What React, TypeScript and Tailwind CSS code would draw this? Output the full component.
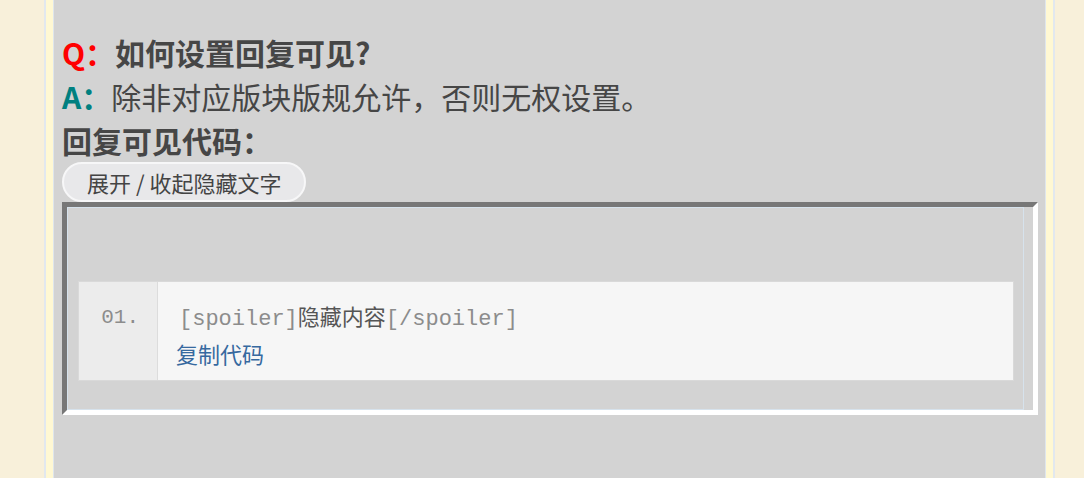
export default function App() {
  const sans = { fontFamily: '"Noto Sans CJK SC", "Noto Sans", sans-serif' };
  const mono = { fontFamily: '"Liberation Mono", monospace' };
  return (
    <div className="w-[1084px] h-[478px] overflow-hidden bg-[#f8f0da]" style={sans}>
      <div className="ml-[44px] w-[1011px] h-[478px] border-x-2 border-[#e2e8ee] bg-[#fff8d3] px-[7px]">
        <div className="h-full border-x border-[#dfe6ec] bg-[#d3d3d3] pl-[8px] pt-[30px] text-[#464646]">
          <div className="h-[44px] leading-[44px] text-[30px] font-bold whitespace-nowrap">
            <span className="text-[#ff0000]">Q：</span>如何设置回复可见?
          </div>
          <div className="h-[44px] leading-[44px] text-[30px] whitespace-nowrap">
            <span className="text-[#008080] font-bold">A：</span>除非对应版块版规允许，否则无权设置。
          </div>
          <div className="h-[44px] leading-[44px] text-[30px] font-bold whitespace-nowrap">回复可见代码：</div>
          <div className="h-[40px] flex">
            <div className="h-[40px] rounded-full border-2 border-[#f7f7f8] bg-[#e8e8ea] px-[23px] text-[22px] leading-[36px] text-[#444] whitespace-nowrap">
              展开 / 收起隐藏文字
            </div>
          </div>
          <div className="w-[976px] h-[213px] border-[5px] border-t-[#777777] border-l-[#777777] border-r-white border-b-white bg-[#d3d3d3]">
            <div className="w-[957px] h-full border border-[#d6e2ec] pt-[73px] pl-[10px] pr-[9px]">
              <div className="flex h-[100px] border border-[#d9d9d9]">
                <div
                  className="w-[79px] bg-[#ececec] border-r border-[#dcdcdc] pt-[19px] pr-[18px] text-right text-[21px] leading-[34px] text-[#8c8c8c]"
                  style={mono}
                >
                  01.
                </div>
                <div className="flex-1 bg-[#f6f6f6] pl-[21px] pt-[16px]">
                  <div className="h-[34px] leading-[34px] text-[22px] whitespace-nowrap">
                    <span className="text-[#8c8c8c]" style={mono}>[spoiler]</span>
                    <span className="text-[#555]">隐藏内容</span>
                    <span className="text-[#8c8c8c]" style={mono}>[/spoiler]</span>
                  </div>
                  <div className="h-[42px] leading-[42px] text-[22px] text-[#36699f] -ml-[3px]">复制代码</div>
                </div>
              </div>
            </div>
          </div>
        </div>
      </div>
    </div>
  );
}
